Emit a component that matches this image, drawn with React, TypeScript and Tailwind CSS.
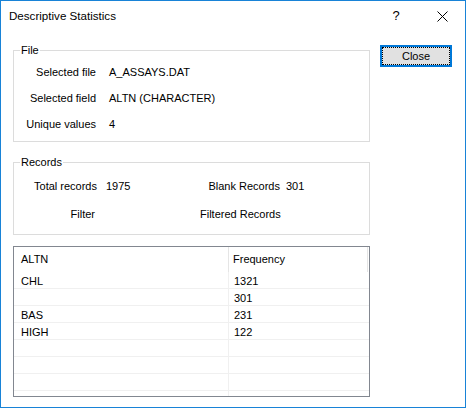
const rows: [string, string][] = [
  ['CHL', '1321'],
  ['', '301'],
  ['BAS', '231'],
  ['HIGH', '122'],
  ['', ''],
  ['', ''],
  ['', ''],
  ['', ''],
]

function GroupBox({ title, className, children }: { title: string; className: string; children: React.ReactNode }) {
  return (
    <div className={`relative border border-[#dcdcdc] ${className}`}>
      <span className="absolute -top-[7px] left-[6px] bg-white px-[1px] leading-[13px]">{title}</span>
      {children}
    </div>
  )
}

export default function App() {
  return (
    <div className="w-[466px] h-[408px] border border-[#1883d7] bg-white flex flex-col overflow-hidden font-['Liberation_Sans',Arial,sans-serif] text-[11px] text-black whitespace-nowrap">
      {/* Title bar */}
      <div className="h-[30px] flex items-center shrink-0">
        <div className="flex-1 pl-[8px] text-[11.6px]">Descriptive Statistics</div>
        <div className="w-[46px] h-full flex items-center justify-center text-[13px]">?</div>
        <div className="w-[46px] h-full flex items-center justify-center">
          <svg width="11" height="11" viewBox="0 0 11 11">
            <path d="M0.5 0.5 L10.5 10.5 M10.5 0.5 L0.5 10.5" stroke="#000" strokeWidth="1" fill="none" />
          </svg>
        </div>
      </div>

      <div className="flex pl-[12px]">
        {/* Left column */}
        <div className="w-[357px] pt-[19px] flex flex-col">
          <GroupBox title="File" className="h-[92px]">
            <div className="grid grid-cols-[82px_1fr] gap-x-[13px] gap-y-[13px] pt-[15px] leading-[13px]">
              <div className="text-right">Selected file</div>
              <div>A_ASSAYS.DAT</div>
              <div className="text-right">Selected field</div>
              <div>ALTN (CHARACTER)</div>
              <div className="text-right">Unique values</div>
              <div>4</div>
            </div>
          </GroupBox>

          <GroupBox title="Records" className="h-[73px] mt-[20px]">
            <div className="grid grid-cols-[83px_103px_80px_1fr] gap-y-[15px] pt-[17px] leading-[13px]">
              <div className="text-right">Total records</div>
              <div className="pl-[9px]">1975</div>
              <div className="text-right">Blank Records</div>
              <div className="pl-[6px]">301</div>
              <div className="text-right pr-[2px]">Filter</div>
              <div></div>
              <div className="text-right">Filtered Records</div>
              <div></div>
            </div>
          </GroupBox>

          {/* List view */}
          <div className="mt-[11px] h-[151px] border border-[#828790] overflow-hidden">
            <div className="h-[25px] flex">
              <div className="w-[215px] border-r border-[#e5e5e5] pl-[7px] flex items-center">ALTN</div>
              <div className="w-[139px] border-r border-[#e5e5e5] pl-[4px] flex items-center">Frequency</div>
            </div>
            {rows.map(([name, freq], i) => (
              <div key={i} className="h-[17px] flex border-b border-[#f0f0f0]">
                <div className="w-[215px] border-r border-[#f0f0f0] pl-[7px] pt-[3px] leading-[13px]">{name}</div>
                <div className="pl-[5px] pt-[3px] leading-[13px]">{freq}</div>
              </div>
            ))}
          </div>
        </div>

        {/* Right column */}
        <div className="pl-[10px] pt-[14px]">
          <button className="w-[72px] h-[22px] border-2 border-[#0078d7] bg-[#e1e1e1] p-0">
            <div className="w-full h-full border border-dotted border-black flex items-center justify-center">Close</div>
          </button>
        </div>
      </div>
    </div>
  )
}
